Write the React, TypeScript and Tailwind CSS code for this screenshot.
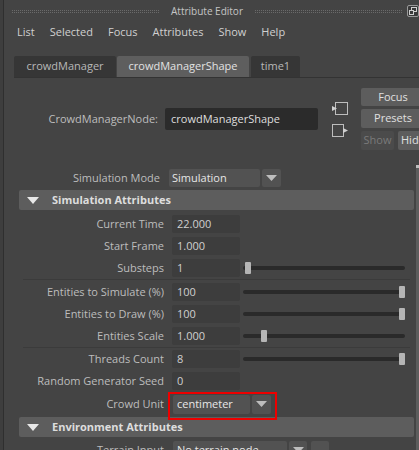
import React from "react";

function Field({ value, width = "w-[68px]" }: { value: string; width?: string }) {
  return (
    <div className={`${width} h-[18px] bg-[#3d3d3d] rounded-[2px] flex items-center pl-[5px] text-[#d0d0d0]`}>
      {value}
    </div>
  );
}

function Slider({ pos }: { pos: number }) {
  return (
    <div className="relative ml-[3px] w-[162px] h-[12px] flex items-center">
      <div className="w-full h-[4px] rounded-full bg-[#2a2a2a]" />
      <div
        className="absolute top-0 w-[6px] h-[12px] rounded-[1px] bg-[#b5b5b5]"
        style={{ left: `${pos}px` }}
      />
    </div>
  );
}

function Row({ label, value, slider }: { label: string; value: string; slider?: number }) {
  return (
    <div className="h-[22px] flex items-center">
      <div className="w-[145px] text-right text-[#bdbdbd] whitespace-nowrap">{label}</div>
      <div className="ml-[8px]">
        <Field value={value} />
      </div>
      {slider !== undefined && <Slider pos={slider} />}
    </div>
  );
}

function Arrow() {
  return (
    <svg width="11" height="6" viewBox="0 0 11 6">
      <path d="M0 0 H11 L5.5 6 Z" fill="#bdbdbd" />
    </svg>
  );
}

function SectionHeader({ title }: { title: string }) {
  return (
    <div className="h-[20px] bg-[#5d5d5d] rounded-[2px] flex items-center">
      <svg width="12" height="7" viewBox="0 0 12 7" className="ml-[8px]">
        <path d="M0 0 H12 L6 7 Z" fill="#e8e8e8" />
      </svg>
      <span className="ml-[13px] font-bold text-[#dddddd]">{title}</span>
    </div>
  );
}

export default function App() {
  return (
    <div className="w-[419px] h-[450px] overflow-hidden bg-[#3e3e3e] font-['Open_Sans',_'Noto_Sans',_sans-serif] text-[11px] relative">
      <div className="ml-[3px] h-full border-l border-[#2f2f2f] bg-[#444444] flex flex-col">
        {/* title bar */}
        <div className="h-[22px] flex items-center pl-[8px] shrink-0">
          <div className="flex-1 h-[3px] border-y border-dotted border-[#6a6a6a]" />
          <span className="px-[12px] text-[10px] text-[#c4c4c4]">Attribute Editor</span>
          <div className="flex-1 h-[3px] border-y border-dotted border-[#6a6a6a]" />
          <div className="ml-[5px] w-[12px] h-[12px] border border-[#9a9a9a] rounded-[2px] bg-[#3a3a3a] flex items-center justify-center">
            <svg width="8" height="8" viewBox="0 0 8 8">
              <rect x="2.5" y="0.5" width="5" height="4" fill="none" stroke="#d0d0d0" />
              <rect x="0.5" y="3.5" width="4" height="4" fill="#3a3a3a" stroke="#d0d0d0" />
            </svg>
          </div>
        </div>
        {/* menu */}
        <div className="h-[20px] flex items-center gap-[15px] pl-[13px] text-[12px] text-[#d0d0d0] shrink-0">
          <span className="text-[11px]">List</span>
          <span className="text-[11px]">Selected</span>
          <span className="text-[11px]">Focus</span>
          <span className="text-[11px]">Attributes</span>
          <span className="text-[11px]">Show</span>
          <span className="text-[11px]">Help</span>
        </div>
        {/* tabs */}
        <div className="mt-[14px] ml-[10px] flex items-end border-b border-[#333333] shrink-0">
          <div className="w-[102px] h-[21px] bg-[#363636] rounded-t-[2px] flex items-center justify-center text-[#b8b8b8]">
            crowdManager
          </div>
          <div className="ml-[1px] w-[132px] h-[21px] bg-[#5e5e5e] rounded-t-[2px] flex items-center justify-center text-[#e2e2e2]">
            crowdManagerShape
          </div>
          <div className="ml-[2px] w-[49px] h-[21px] bg-[#363636] rounded-t-[2px] flex items-center justify-center text-[#b8b8b8]">
            time1
          </div>
        </div>
        {/* node row */}
        <div className="flex mt-[10px] shrink-0">
          <div className="flex-1 flex items-center">
            <div className="w-[154px] text-right text-[#bdbdbd]">CrowdManagerNode:</div>
            <div className="ml-[7px] w-[153px] h-[22px] bg-[#2b2b2b] rounded-[2px] flex items-center pl-[6px] text-[#dedede]">
              crowdManagerShape
            </div>
            <div className="ml-[14px] flex flex-col gap-[9px]">
              <svg width="16" height="13" viewBox="0 0 16 13">
                <rect x="3.5" y="0.5" width="12" height="12" fill="none" stroke="#bdbdbd" />
                <path d="M0 4 L5 6.5 L0 9 Z" fill="#d0d0d0" />
              </svg>
              <svg width="16" height="13" viewBox="0 0 16 13">
                <rect x="0.5" y="0.5" width="11" height="12" fill="none" stroke="#bdbdbd" />
                <path d="M11 4 L16 6.5 L11 9 Z" fill="#d0d0d0" />
              </svg>
            </div>
          </div>
          <div className="w-[59px] flex flex-col gap-[3px] ml-[13px]">
            <div className="h-[18px] w-[64px] bg-[#5d5d5d] rounded-[2px] flex items-center justify-center text-[#e0e0e0]">
              Focus
            </div>
            <div className="h-[19px] w-[64px] bg-[#5d5d5d] rounded-[2px] flex items-center justify-center text-[#e0e0e0]">
              Presets
            </div>
            <div className="h-[19px] flex gap-[4px]">
              <div className="w-[33px] shrink-0 bg-[#4b4b4b] rounded-[2px] flex items-center justify-center text-[#7a7a7a]">
                Show
              </div>
              <div className="w-[30px] shrink-0 bg-[#5d5d5d] rounded-[2px] flex items-center pl-[3px] text-[#e0e0e0]">
                Hide
              </div>
            </div>
          </div>
        </div>
        {/* simulation mode */}
        <div className="mt-[19px] h-[18px] flex items-center shrink-0">
          <div className="w-[156px] text-right text-[#bdbdbd]">Simulation Mode</div>
          <div className="ml-[9px] w-[91px] h-[18px] bg-[#525252] rounded-[2px] flex items-center pl-[3px] text-[#e6e6e6]">
            Simulation
          </div>
          <div className="ml-[2px] w-[19px] h-[18px] bg-[#525252] rounded-[2px] flex items-center justify-center">
            <Arrow />
          </div>
        </div>
        {/* section */}
        <div className="mt-[3px] ml-[15px] w-[395px] shrink-0">
          <SectionHeader title="Simulation Attributes" />
          <div className="pt-[3px]">
            <Row label="Current Time" value="22.000" />
            <Row label="Start Frame" value="1.000" />
            <Row label="Substeps" value="1" slider={2} />
            <div className="mx-[4px] h-[2px] border-t border-[#3b3b3b]" />
            <Row label="Entities to Simulate (%)" value="100" slider={156} />
            <Row label="Entities to Draw (%)" value="100" slider={156} />
            <Row label="Entities Scale" value="1.000" slider={18} />
            <div className="mx-[4px] h-[1px] bg-[#3b3b3b]" />
            <Row label="Threads Count" value="8" slider={156} />
            <Row label="Random Generator Seed" value="0" />
            <div className="h-[24px] flex items-center">
              <div className="w-[145px] text-right text-[#bdbdbd]">Crowd Unit</div>
              <div className="ml-[9px] relative flex items-center">
                <div className="w-[77px] h-[19px] bg-[#525252] rounded-[2px] flex items-center pl-[4px] text-[#e8e8e8]">
                  centimeter
                </div>
                <div className="ml-[2px] w-[19px] h-[19px] bg-[#525252] rounded-[2px] flex items-center justify-center">
                  <Arrow />
                </div>
                <div className="absolute left-[-5px] top-[-3px] right-[-6px] bottom-[-6px] border-2 border-[#ee0000]" />
              </div>
            </div>
          </div>
          <div className="mt-[1px]">
            <SectionHeader title="Environment Attributes" />
          </div>
          <div className="pt-[4px] h-[22px] flex items-start">
            <div className="w-[145px] text-right text-[#bdbdbd] leading-[18px]">Terrain Input</div>
            <div className="ml-[9px] w-[114px] h-[18px] bg-[#525252] rounded-[2px] flex items-center pl-[4px] text-[#e6e6e6]">
              No terrain node
            </div>
            <div className="ml-[2px] w-[18px] h-[18px] bg-[#525252] rounded-[2px] flex items-center justify-center">
              <Arrow />
            </div>
            <div className="ml-[4px] w-[18px] h-[18px] bg-[#525252] rounded-[2px]" />
          </div>
        </div>
      </div>
      {/* scrollbar */}
      <div className="absolute right-0 top-[165px] w-[3px] h-[285px] bg-[#5d5d5d] border-t-[3px] border-[#bdbdbd]" />
    </div>
  );
}
